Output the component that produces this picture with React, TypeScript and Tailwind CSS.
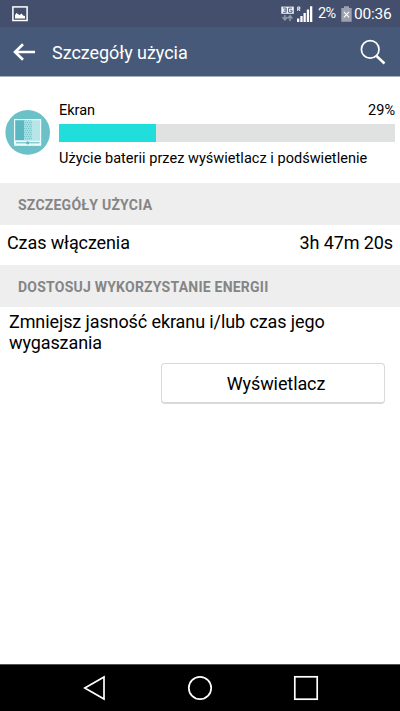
import React from 'react';

function StatusBar() {
  return (
    <div className="flex h-[27px] items-center bg-[#434f6d] pl-3 pr-[7px] text-white">
      <svg width="16" height="16" viewBox="0 0 16 16" className="mt-px">
        <rect x="0.9" y="0.9" width="14.2" height="13.6" fill="none" stroke="#fff" strokeWidth="1.5" />
        <path d="M3 12.5V9L4.6 7l1.6 1.2 1.6.8 1.8-1.4L11 9.4l2 .6v2.5z" fill="#fff" />
      </svg>
      <svg width="32" height="18" viewBox="0 0 32 18" className="ml-auto">
        <rect x="0.3" y="1.6" width="12.5" height="7.2" fill="#f2f3f6" />
        <path d="M2 3h3.2v4.3H2M2.8 5.1h2.4M11 3.1H7.6v4.2H11V5.3H9.3" fill="none" stroke="#434f6d" strokeWidth="0.9" />
        <path d="M3.9 10v4M1.5 12.1l2.4 2.8 2.4-2.8M9.1 16v-4M6.8 13.4l2.3-2.8 2.3 2.8" fill="none" stroke="#9299aa" strokeWidth="1.5" />
        <path d="M16.7 6V2h2.1v2h-2.1m1.1 0L19 6" fill="none" stroke="#fff" strokeWidth="0.9" />
        <path d="M16 13.5h2.3V17H16zM19.3 11h2.3v6h-2.3zM22.5 8h2.3v9h-2.3zM25.8 4.5h2.3V17h-2.3zM29 1.3h2.3V17H29z" fill="#fff" />
      </svg>
      <span className="ml-[5px] w-[20px] whitespace-nowrap pt-px text-[14.5px] leading-[26px] tracking-[-0.6px]">2%</span>
      <svg width="11" height="17" viewBox="0 0 11 17" className="ml-[3px]">
        <path d="M3 1.2h5V3h2.7v13.7H.3V3H3z" fill="#9ca1ad" />
        <path d="m2.9 6.8 5.2 5.5m0-5.5-5.2 5.5" stroke="#fff" strokeWidth="1.1" />
      </svg>
      <span className="ml-[2px] w-[39px] whitespace-nowrap pt-px text-[15.5px] leading-[26px] tracking-[-0.25px]">00:36</span>
    </div>
  );
}

function Header() {
  return (
    <header className="flex h-[50px] items-center border-b border-[#a6aebd] bg-[#475979] pl-[13px] pr-[14px] text-white">
      <svg width="23" height="20" viewBox="0 0 23 20">
        <path d="M22 10H2M10 2.2 2 10l8 7.8" fill="none" stroke="#fff" strokeWidth="2.6" />
      </svg>
      <h1 className="ml-4 pt-px text-[18px] leading-[49px] tracking-[-0.04px]">Szczegóły użycia</h1>
      <svg width="26" height="26" viewBox="0 0 26 26" className="ml-auto">
        <circle cx="10.2" cy="10.4" r="8.8" fill="none" stroke="#fff" strokeWidth="1.7" />
        <path d="m16.5 17 8 7.5" stroke="#fff" strokeWidth="2.4" />
      </svg>
    </header>
  );
}

function ScreenIcon() {
  return (
    <svg width="46" height="46" viewBox="0 0 46 46">
      <defs>
        <pattern id="dots" width="2" height="4" patternUnits="userSpaceOnUse">
          <rect width="2" height="4" fill="#a3dfe2" />
          <path d="M0 0h1v1H0zM1 2h1v1H1z" fill="#78c5ca" />
        </pattern>
      </defs>
      <circle cx="22.7" cy="22.4" r="22.3" fill="#6cc1c8" />
      <path d="M10 10h9v20h-9z" fill="#5bb7c0" />
      <path d="M19 10h8v20h-8z" fill="url(#dots)" />
      <path d="M27 10h8.5v20H27z" fill="#b7e6e8" />
      <path d="M10 30.3h25.5v5H10z" fill="#eef9fa" />
      <rect x="9.6" y="9.6" width="26" height="25.6" fill="none" stroke="#eef9fa" strokeWidth="1.2" />
      <path d="M11 32.8h23.5" stroke="#5bb7c0" strokeWidth="1" />
      <circle cx="22.7" cy="32.8" r="1.6" fill="#5bb7c0" />
    </svg>
  );
}

function SectionTitle({ children }: { children: React.ReactNode }) {
  return (
    <h2 className="h-[42px] bg-[#eeeeee] pl-[18px] pt-px text-[14px] font-bold leading-[42px] tracking-[0.23px] text-[#858585]">
      {children}
    </h2>
  );
}

export default function App() {
  return (
    <div className="flex h-[711px] w-[400px] flex-col overflow-hidden bg-white font-[Roboto,sans-serif] text-black">
      <StatusBar />
      <Header />
      <main className="flex flex-1 flex-col">
        <section className="flex h-[106px] pl-[5px] pr-[5px] pt-[24px]">
          <div className="mt-[9px] w-[46px] shrink-0">
            <ScreenIcon />
          </div>
          <div className="ml-2 flex-1">
            <div className="flex h-[23px] justify-between text-[14.5px] leading-[19px]">
              <span>Ekran</span>
              <span>29%</span>
            </div>
            <div className="h-[18px] bg-[#e0e2e1]">
              <div className="h-full w-[29%] bg-[#20dedc]" />
            </div>
            <p className="mt-[7px] whitespace-nowrap text-[14.5px] leading-[20px] tracking-[0.03px]">
              Użycie baterii przez wyświetlacz i podświetlenie
            </p>
          </div>
        </section>
        <SectionTitle>SZCZEGÓŁY UŻYCIA</SectionTitle>
        <div className="flex h-[40px] justify-between pl-[7px] pr-[7px] text-[18px] leading-[36px] tracking-[-0.1px]">
          <span>Czas włączenia</span>
          <span>3h 47m 20s</span>
        </div>
        <SectionTitle>DOSTOSUJ WYKORZYSTANIE ENERGII</SectionTitle>
        <p className="pl-[9px] pt-[4px] text-[18px] leading-[21px] tracking-[-0.1px]">
          Zmniejsz jasność ekranu i/lub czas jego
          <br />
          wygaszania
        </p>
        <button className="ml-[161px] mt-[10px] h-[41px] w-[224px] rounded-[4px] border border-b-2 border-[#d9d9d9] bg-white pl-[6px] text-[18px] tracking-[-0.1px]">
          Wyświetlacz
        </button>
      </main>
      <nav className="flex h-[47px] items-center justify-between border-t border-[#555] bg-black pl-[83px] pr-[81px]">
        <svg width="24" height="26" viewBox="0 0 24 26">
          <path d="M21 2v22L1.8 13z" fill="none" stroke="#fff" strokeWidth="1.7" />
        </svg>
        <svg width="26" height="26" viewBox="0 0 26 26">
          <circle cx="13" cy="13" r="11.2" fill="none" stroke="#fff" strokeWidth="1.7" />
        </svg>
        <svg width="26" height="26" viewBox="0 0 26 26">
          <rect x="1.8" y="1.8" width="22.4" height="22.4" fill="none" stroke="#fff" strokeWidth="1.7" />
        </svg>
      </nav>
    </div>
  );
}
